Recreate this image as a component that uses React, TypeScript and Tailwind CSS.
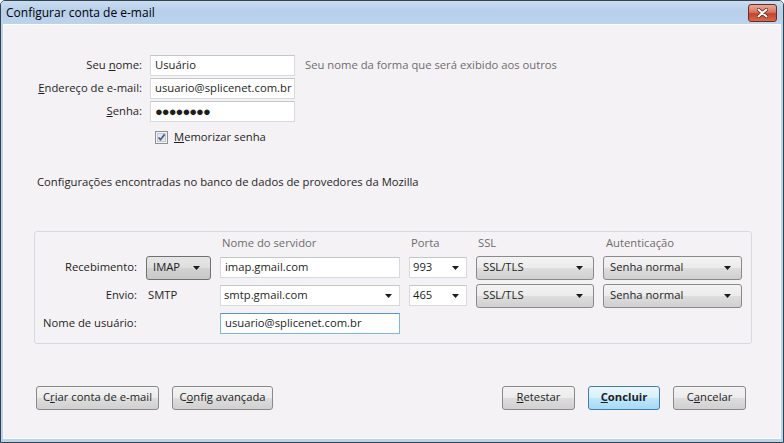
import React from "react";

const FONT = "font-['Open_Sans','Noto_Sans',sans-serif] text-[11.25px] text-[#1e1e1e]";

const BTN_BG =
    "bg-[linear-gradient(to_bottom,#f3f3f3_0%,#ececec_48%,#dddddd_52%,#d0d0d0_100%)] border border-[#8a8a8a] rounded-[3px]";

function Arrow() {
    return (
        <svg width="7" height="4" viewBox="0 0 7 4" className="shrink-0">
            <path d="M0 0h7L3.5 4z" fill="#1a1a1a" />
        </svg>
    );
}

// read-only combobox drawn as a button
function ComboButton({ width, text, pressed }: { width: string; text: string; pressed?: boolean }) {
    return (
        <div
            className={`${width} h-[24px] flex items-center justify-between pl-[6px] pr-[10px] ${
                pressed
                    ? "bg-[linear-gradient(to_bottom,#e6e6e6_0%,#dedede_50%,#d2d2d2_52%,#c8c8c8_100%)] border border-[#707070] rounded-[3px]"
                    : BTN_BG
            }`}
        >
            <span>{text}</span>
            <Arrow />
        </div>
    );
}

// editable combobox: white field + arrow
function ComboEdit({ width, text }: { width: string; text: string }) {
    return (
        <div
            className={`${width} h-[21px] flex items-center justify-between pl-[3px] pr-[7px] bg-white border border-[#d6d9dd] border-t-[#c3c6ca]`}
        >
            <span>{text}</span>
            <Arrow />
        </div>
    );
}

function TextField({ width, children, focus }: { width: string; children: React.ReactNode; focus?: boolean }) {
    return (
        <div
            className={`${width} h-[21px] flex items-center pl-[4px] bg-white border ${
                focus ? "border-[#7eb4ea] border-t-[#5593d3]" : "border-[#d6d9dd] border-t-[#c3c6ca]"
            }`}
        >
            {children}
        </div>
    );
}

function PushButton({
    width,
    children,
    primary,
}: {
    width: string;
    children: React.ReactNode;
    primary?: boolean;
}) {
    return (
        <div
            className={`${width} h-[24px] flex items-center justify-center ${
                primary
                    ? "bg-[linear-gradient(to_bottom,#eaf6fd_0%,#d9f0fc_48%,#bee6fd_52%,#a7d9f5_100%)] border border-[#3c7fb1] rounded-[3px] font-bold"
                    : BTN_BG
            }`}
        >
            {children}
        </div>
    );
}

function Checkbox() {
    return (
        <svg width="13" height="13" viewBox="0 0 13 13">
            <rect x="0.5" y="0.5" width="12" height="12" fill="#f4f4f4" stroke="#8e8f8f" />
            <rect x="2.5" y="2.5" width="8" height="8" fill="#e4e7ea" stroke="#c4c8cc" />
            <path d="M3.5 6.5l2 2.2L9.6 3.4" fill="none" stroke="#4a5f97" strokeWidth="1.8" />
        </svg>
    );
}

export default function App() {
    return (
        <div className={`${FONT} w-[784px] h-[443px] flex flex-col bg-[#b9d3ee] border border-[#34414f] rounded-t-[5px] overflow-hidden`}>
            {/* title bar */}
            <div className="h-[23px] shrink-0 flex items-center justify-between pl-[5px] pr-[6px] bg-[linear-gradient(to_bottom,#c9dcf1_0%,#b7cfea_45%,#bcd3ec_100%)]">
                <span className="text-[#000] text-[12px]">Configurar conta de e-mail</span>
                <div className="w-[29px] h-[18px] mt-[1px] rounded-[3px] border border-[#6d2a1d] bg-[linear-gradient(to_bottom,#e9a99a_0%,#d47560_45%,#c2442b_55%,#d8694d_100%)] flex items-center justify-center">
                    <svg width="11" height="10" viewBox="0 0 11 10">
                        <path d="M1.5 1.5l8 7M9.5 1.5l-8 7" stroke="#4a1a10" strokeWidth="3.4" strokeLinecap="round" />
                        <path d="M1.5 1.5l8 7M9.5 1.5l-8 7" stroke="#ffffff" strokeWidth="2" strokeLinecap="round" />
                    </svg>
                </div>
            </div>

            {/* client area */}
            <div className="flex-1 mx-[2px] mb-[3px] bg-[#f5f2f5] border border-[#fdfdfd] flex flex-col">
                {/* account fields */}
                <div className="mt-[30px] flex flex-col gap-[2px]">
                    <div className="flex items-center">
                        <div className="w-[138px] text-right">
                            Seu <span className="underline">n</span>ome:
                        </div>
                        <TextField width="w-[145px] ml-[8px]">Usuário</TextField>
                        <span className="ml-[10px] text-[#6d6d6d]">Seu nome da forma que será exibido aos outros</span>
                    </div>
                    <div className="flex items-center">
                        <div className="w-[138px] text-right">
                            <span className="underline">E</span>ndereço de e-mail:
                        </div>
                        <TextField width="w-[145px] ml-[8px]">usuario@splicenet.com.br</TextField>
                    </div>
                    <div className="flex items-center">
                        <div className="w-[138px] text-right">
                            <span className="underline">S</span>enha:
                        </div>
                        <TextField width="w-[145px] ml-[8px]">
                            <span className="text-[13px] tracking-[-1px] leading-none">●●●●●●●●</span>
                        </TextField>
                    </div>
                    <div className="flex items-center ml-[151px] mt-[5px] gap-[6px]">
                        <Checkbox />
                        <span>
                            <span className="underline">M</span>emorizar senha
                        </span>
                    </div>
                </div>

                <div className="ml-[33px] mt-[28px]">
                    Configurações encontradas no banco de dados de provedores da Mozilla
                </div>

                {/* server settings group */}
                <div className="ml-[30px] mr-[28px] mt-[40px] border border-[#d5dadf] rounded-[3px] pt-[4px] pb-[7px]">
                    <div className="grid grid-cols-[102px_65px_180px_58px_118px_139px] gap-x-[9px] gap-y-[4px] grid-rows-[16px_24px_24px_24px] items-center">
                        <div />
                        <div />
                        <div className="text-[#6d6d6d] pl-[2px]">Nome do servidor</div>
                        <div className="text-[#6d6d6d] pl-[2px]">Porta</div>
                        <div className="text-[#6d6d6d] pl-[2px]">SSL</div>
                        <div className="text-[#6d6d6d] pl-[3px]">Autenticação</div>

                        <div className="text-right">Recebimento:</div>
                        <ComboButton width="w-[65px]" text="IMAP" pressed />
                        <TextField width="w-[180px]">imap.gmail.com</TextField>
                        <ComboEdit width="w-[58px]" text="993" />
                        <ComboButton width="w-[118px]" text="SSL/TLS" />
                        <ComboButton width="w-[139px]" text="Senha normal" />

                        <div className="text-right">Envio:</div>
                        <div className="pl-[2px]">SMTP</div>
                        <ComboEdit width="w-[180px]" text="smtp.gmail.com" />
                        <ComboEdit width="w-[58px]" text="465" />
                        <ComboButton width="w-[118px]" text="SSL/TLS" />
                        <ComboButton width="w-[139px]" text="Senha normal" />

                        <div className="col-span-2 pl-[8px]">Nome de usuário:</div>
                        <TextField width="w-[180px]" focus>
                            usuario@splicenet.com.br
                        </TextField>
                        <div />
                        <div />
                        <div />
                    </div>
                </div>

                {/* buttons */}
                <div className="mt-[42px] ml-[32px] mr-[34px] flex items-center">
                    <PushButton width="w-[123px]">
                        C<span className="underline">r</span>iar conta de e-mail
                    </PushButton>
                    <PushButton width="w-[101px] ml-[13px]">
                        C<span className="underline">o</span>nfig avançada
                    </PushButton>
                    <div className="flex-1" />
                    <PushButton width="w-[73px]">
                        <span className="underline">R</span>etestar
                    </PushButton>
                    <PushButton width="w-[72px] ml-[13px]" primary>
                        <span className="underline">C</span>oncluir
                    </PushButton>
                    <PushButton width="w-[73px] ml-[13px]">
                        C<span className="underline">a</span>ncelar
                    </PushButton>
                </div>
            </div>
        </div>
    );
}
